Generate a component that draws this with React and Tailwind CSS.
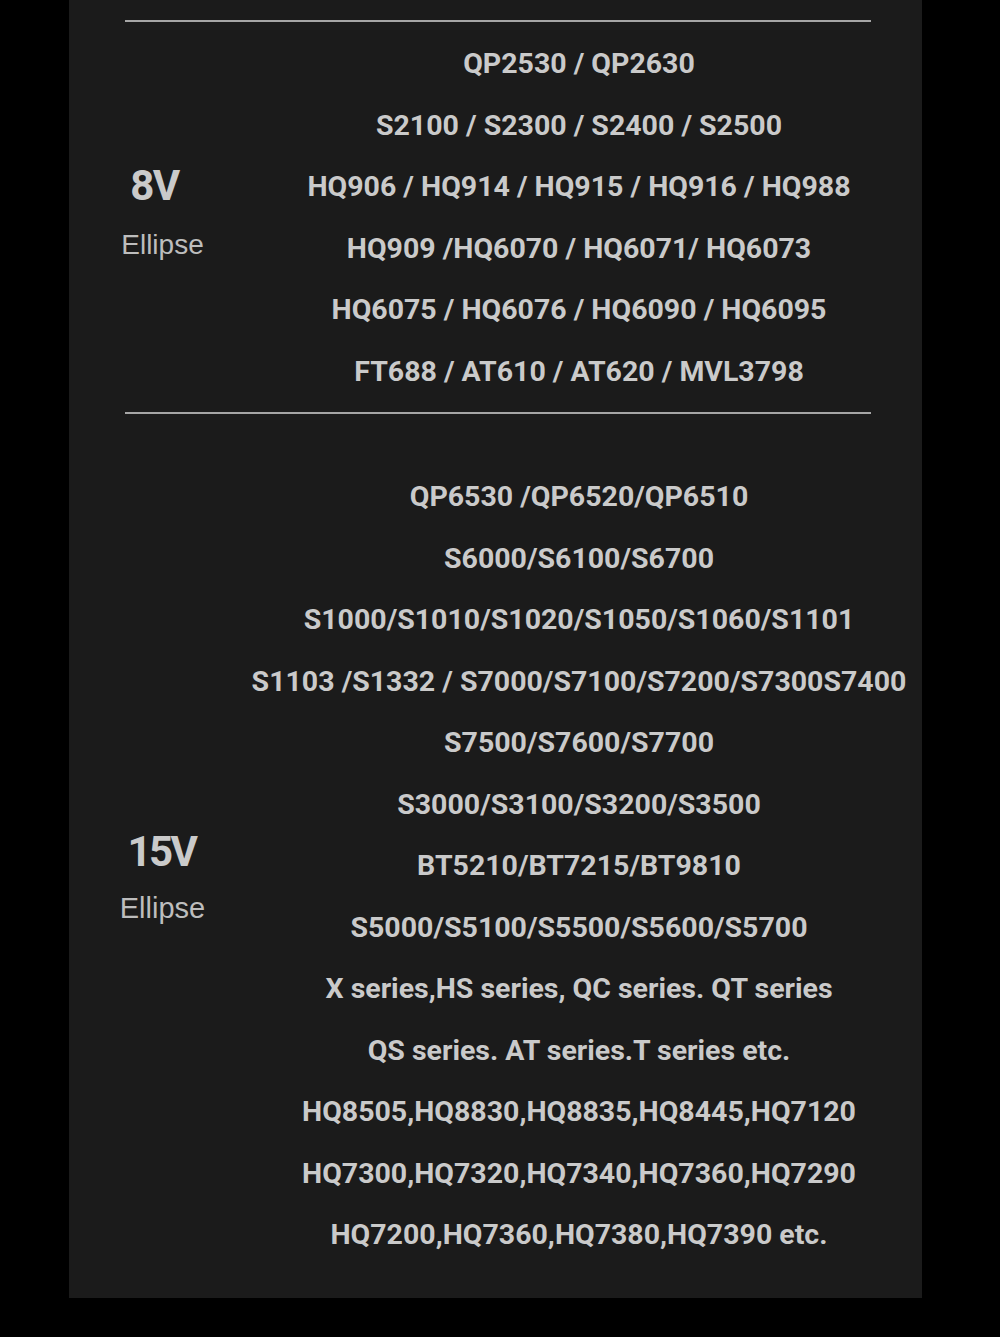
export default function App() {
  const s1 = [
    "QP2530 / QP2630",
    "S2100 / S2300 / S2400 / S2500",
    "HQ906 / HQ914 / HQ915 / HQ916 / HQ988",
    "HQ909 /HQ6070 / HQ6071/ HQ6073",
    "HQ6075 / HQ6076 / HQ6090 / HQ6095",
    "FT688 / AT610 / AT620 / MVL3798",
  ];
  const s2 = [
    "QP6530 /QP6520/QP6510",
    "S6000/S6100/S6700",
    "S1000/S1010/S1020/S1050/S1060/S1101",
    "S1103 /S1332 / S7000/S7100/S7200/S7300S7400",
    "S7500/S7600/S7700",
    "S3000/S3100/S3200/S3500",
    "BT5210/BT7215/BT9810",
    "S5000/S5100/S5500/S5600/S5700",
    "X series,HS series, QC series. QT series",
    "QS series. AT series.T series etc.",
    "HQ8505,HQ8830,HQ8835,HQ8445,HQ7120",
    "HQ7300,HQ7320,HQ7340,HQ7360,HQ7290",
    "HQ7200,HQ7360,HQ7380,HQ7390 etc.",
  ];
  const Rows = ({ items }) => (
    <div className="flex-1 flex flex-col items-center">
      {items.map((t, i) => (
        <div
          key={i}
          className="h-[61.5px] leading-[61.5px] whitespace-nowrap text-[28.5px] font-bold text-[#cacaca] font-['Roboto',sans-serif]"
        >
          {t}
        </div>
      ))}
    </div>
  );
  return (
    <div className="w-[1000px] h-[1337px] bg-black overflow-hidden">
      <div className="ml-[69px] w-[853px] h-[1298px] bg-[#1b1b1b] pt-[20px]">
        <div className="ml-[56px] w-[746px] h-[2px] bg-[#a6a6a6]" />
        <div className="flex pt-[11px] pb-[10px] pr-[12px]">
          <div className="w-[179px] flex flex-col items-center justify-center pb-[12px]">
            <div className="mr-[8px] text-[42px] leading-[44px] font-bold tracking-[-1.5px] text-[#cacaca] font-['Roboto',sans-serif]">
              8V
            </div>
            <div className="ml-[8px] mt-[23px] text-[28px] leading-[28px] text-[#bdbdbd] font-['Liberation_Sans',Arial,sans-serif]">
              Ellipse
            </div>
          </div>
          <Rows items={s1} />
        </div>
        <div className="ml-[56px] w-[746px] h-[2px] bg-[#a6a6a6]" />
        <div className="flex pt-[52px] pr-[12px]">
          <div className="w-[179px] flex flex-col items-center justify-center pt-[21px]">
            <div className="ml-[6px] text-[42px] leading-[44px] font-bold tracking-[-2.5px] text-[#cacaca] font-['Roboto',sans-serif]">
              15V
            </div>
            <div className="ml-[8px] mt-[20px] text-[29px] leading-[29px] text-[#bdbdbd] font-['Liberation_Sans',Arial,sans-serif]">
              Ellipse
            </div>
          </div>
          <Rows items={s2} />
        </div>
      </div>
    </div>
  );
}
